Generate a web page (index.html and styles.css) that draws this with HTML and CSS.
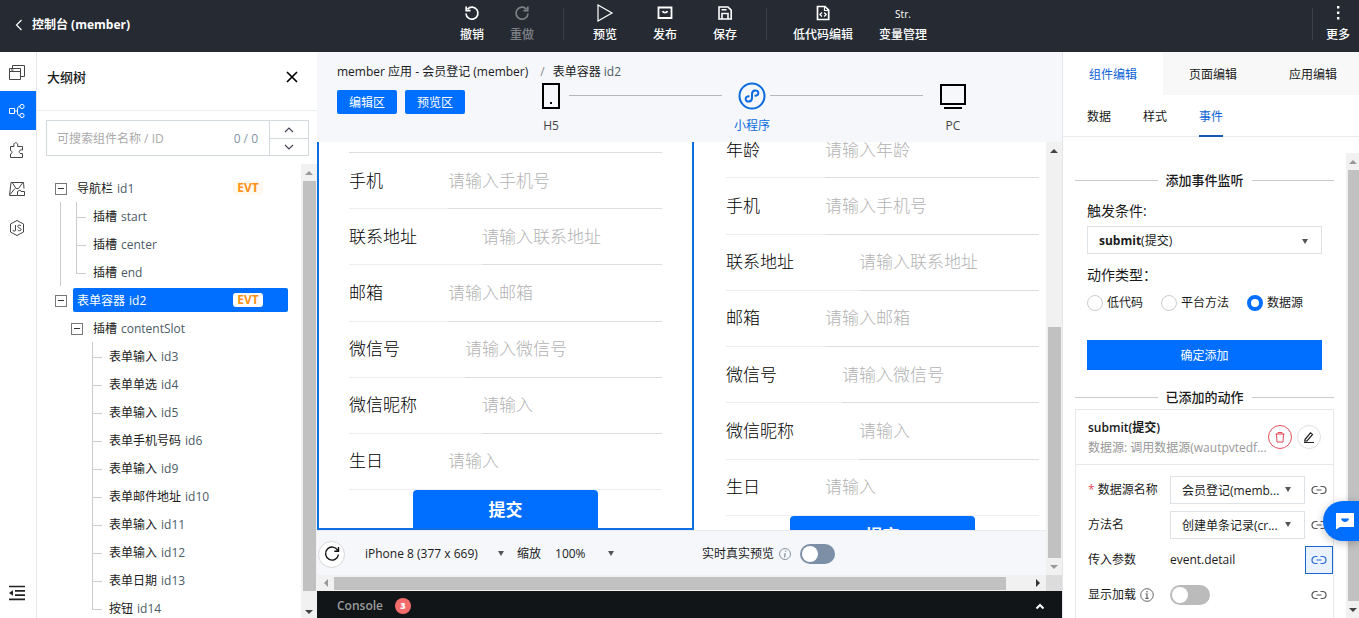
FILE: index.html
```html
<!DOCTYPE html>
<html lang="zh-CN">
<head>
<meta charset="utf-8">
<meta name="viewport" content="width=device-width, initial-scale=1">
<title>控制台 (member)</title>
<link rel="stylesheet" href="styles.css">
</head>
<body>
<header class="topbar">
  <a class="back" href="#">
    <svg width="8" height="12" viewBox="0 0 8 12"><path d="M6.500 1 1.500 6l5 5" fill="none" stroke="#fff" stroke-width="1.200"/></svg>
    <span>控制台 (member)</span>
  </a>
  <nav class="tools">
    <button class="tool"><svg viewBox="0 0 18 18"><path d="M4.500 5.200A6 6 0 1 1 3 9.500M3.200 2.500v4.200h4.300" fill="none" stroke="currentColor" stroke-width="1.700"/></svg>撤销</button>
    <button class="tool" disabled><svg viewBox="0 0 18 18"><path d="M13.500 5.200A6 6 0 1 0 15 9.500M14.800 2.500v4.200h-4.300" fill="none" stroke="currentColor" stroke-width="1.700"/></svg>重做</button>
    <i class="sep"></i>
    <button class="tool mid"><svg viewBox="0 0 18 18"><path d="M2 1v16l14-8z" fill="none" stroke="currentColor" stroke-width="1.200"/></svg>预览</button>
    <button class="tool mid"><svg viewBox="0 0 18 18"><path d="M2.500 3.500h13v10.500h-13z" fill="none" stroke="currentColor" stroke-width="1.800"/><path d="M6.500 7.200c1 2 4 2 5 0" fill="none" stroke="currentColor" stroke-width="1.800"/></svg>发布</button>
    <button class="tool mid"><svg viewBox="0 0 18 18"><path d="M3 3h9l3.200 3.200V15H3zM6 15V9.500h6V15M5.500 5.800h5" fill="none" stroke="currentColor" stroke-width="1.600"/></svg>保存</button>
    <i class="sep second"></i>
    <button class="tool wide"><svg viewBox="0 0 18 18"><path d="M3.500 2.500h7.500l3.700 3.700v9.300H3.500z" fill="none" stroke="currentColor" stroke-width="1.700"/><path d="M10.500 2.500v4h4" fill="none" stroke="currentColor" stroke-width="1.200"/><path d="M8 8.500 6 10.500l2 2M10.200 8.500l2 2-2 2" fill="none" stroke="currentColor" stroke-width="1.300"/></svg>低代码编辑</button>
    <button class="tool wide"><span class="str">Str.</span>变量管理</button>
  </nav>
  <div class="more">
    <i class="sep"></i>
    <button class="tool"><svg viewBox="0 0 18 18"><path d="M8 2h2.400v2.400H8zM8 7.500h2.400v2.400H8zM8 13h2.400v2.400H8z" fill="currentColor"/></svg>更多</button>
  </div>
</header>

<main class="workspace">
  <nav class="rail">
    <button aria-label="页面"><svg viewBox="0 0 18 18"><path d="M1.500 5.500h11v11h-11zM1.500 8.500h11M4.500 5V2.500h12v11h-3.500M3 7h2.500" fill="none" stroke="currentColor"/></svg></button>
    <button class="active" aria-label="大纲树"><svg viewBox="0 0 18 18"><path d="M1.500 6.500h5v5h-5zM6.500 9h3M12 4.500c-2 0-2.500 1-2.500 2.500v4c0 1.500.5 2.500 2.500 2.500" fill="none" stroke="currentColor"/><circle cx="14" cy="4.500" r="2.100" fill="none" stroke="currentColor"/><circle cx="14" cy="13.500" r="2.100" fill="none" stroke="currentColor"/></svg></button>
    <button aria-label="组件"><svg viewBox="0 0 18 18"><path d="M2.500 5.500H6c-1.500-5 5-5 3.600 0H14.500v3.500c-4.500-1-4.500 4.500 0 3.500V16.500H2.500V13c2 0 2-3.500 0-3.500z" fill="none" stroke="currentColor"/></svg></button>
    <button aria-label="素材"><svg viewBox="0 0 18 18"><path d="M9 15.500H1.500L3 2.500h12.500l.5 6M4.500 3 8 8.500h2.500L14.500 3M2 14.500l5-6M9.500 15.500v-4l2.500-1.500 1 1.500h3.500v4z" fill="none" stroke="currentColor"/></svg></button>
    <button aria-label="脚本"><svg viewBox="0 0 18 18"><path d="M9 1.500 15.500 5v8L9 16.500 2.500 13V5z" fill="none" stroke="currentColor"/><path d="M7.500 6v5c0 1.800-2.500 1.600-2.500 0M13 6.800c-1-1.200-3.300-.8-3.300.7 0 1.800 3.400 1.200 3.400 3 0 1.500-2.600 1.700-3.600.4" fill="none" stroke="currentColor"/></svg></button>
    <button class="fold" aria-label="收起"><svg viewBox="0 0 18 18"><path d="M1 2.500h16M7 6.800h10M7 11.100h10M1 15.400h16" stroke="currentColor" stroke-width="1.700"/><path d="M1 9l4-2.800v5.600z" fill="currentColor"/></svg></button>
  </nav>

  <section class="outline">
    <div class="outline-head">
      <h2>大纲树</h2>
      <button aria-label="关闭"><svg width="12" height="12" viewBox="0 0 12 12"><path d="m1 1 10 10M11 1 1 11" stroke="#000" stroke-width="1.700"/></svg></button>
    </div>
    <div class="search">
      <input type="text" aria-label="搜索组件" placeholder="可搜索组件名称 / ID">
      <span class="count">0 / 0</span>
      <div class="stepper">
        <button aria-label="上一个"><svg width="10" height="6" viewBox="0 0 10 6"><path d="m1 5 4-4 4 4" fill="none" stroke="#445" stroke-width="1.200"/></svg></button>
        <button aria-label="下一个"><svg width="10" height="6" viewBox="0 0 10 6"><path d="m1 1 4 4 4-4" fill="none" stroke="#445" stroke-width="1.200"/></svg></button>
      </div>
    </div>
    <div class="tree-area">
      <ul class="tree">
        <li>
          <div class="node"><button class="toggle" aria-label="折叠"></button><span class="name">导航栏 <em>id1</em><b class="evt">EVT</b></span></div>
          <ul class="kids ruled">
            <li class="leaf"><span class="name">插槽 <em>start</em></span></li>
            <li class="leaf"><span class="name">插槽 <em>center</em></span></li>
            <li class="leaf"><span class="name">插槽 <em>end</em></span></li>
          </ul>
        </li>
        <li>
          <div class="node selected"><button class="toggle" aria-label="折叠"></button><span class="name">表单容器 <em>id2</em><b class="evt">EVT</b></span></div>
          <ul class="kids">
            <li>
              <div class="node"><button class="toggle" aria-label="折叠"></button><span class="name">插槽 <em>contentSlot</em></span></div>
              <ul class="kids deep">
                <li class="leaf"><span class="name">表单输入 <em>id3</em></span></li>
                <li class="leaf"><span class="name">表单单选 <em>id4</em></span></li>
                <li class="leaf"><span class="name">表单输入 <em>id5</em></span></li>
                <li class="leaf"><span class="name">表单手机号码 <em>id6</em></span></li>
                <li class="leaf"><span class="name">表单输入 <em>id9</em></span></li>
                <li class="leaf"><span class="name">表单邮件地址 <em>id10</em></span></li>
                <li class="leaf"><span class="name">表单输入 <em>id11</em></span></li>
                <li class="leaf"><span class="name">表单输入 <em>id12</em></span></li>
                <li class="leaf"><span class="name">表单日期 <em>id13</em></span></li>
                <li class="leaf"><span class="name">按钮 <em>id14</em></span></li>
              </ul>
            </li>
          </ul>
        </li>
      </ul>
      <div class="vbar tree-bar"><i class="up dim"></i><i class="thumb"></i><i class="down"></i></div>
    </div>
  </section>

  <section class="center">
    <div class="center-head">
      <div class="crumbs"><span>member 应用 - 会员登记 (member)</span><span class="slash">/</span><span>表单容器 <em>id2</em></span></div>
      <div class="head-row">
        <div class="areas"><button>编辑区</button><button>预览区</button></div>
        <div class="devices">
          <button class="device"><svg viewBox="0 0 28 28"><path d="M6 2h16v24H6z" fill="none" stroke="#000" stroke-width="2"/><path d="M13 20h2v2h-2z"/></svg>H5</button>
          <i class="link"></i>
          <button class="device on"><svg viewBox="0 0 28 28"><circle cx="14" cy="14" r="12.500" fill="none" stroke="#0b6be0" stroke-width="2"/><path d="M11.500 14.200C6 14 7 20 10.800 19.600 13 19.400 14 18 14 16v-4c0-2 1-3.500 3.200-3.600C21 8.200 22 13.500 16.500 13.800" fill="none" stroke="#0b6be0" stroke-width="2"/></svg>小程序</button>
          <i class="link"></i>
          <button class="device"><svg viewBox="0 0 28 28"><path d="M2 3h24v19H2z" fill="none" stroke="#000" stroke-width="2"/><path d="M5 26h18" stroke="#000" stroke-width="2"/></svg>PC</button>
        </div>
      </div>
    </div>
    <div class="center-body">
      <div class="stage">
        <div class="screen editing">
          <form class="form">
            <div class="fields">
              <div class="field"><label for="a2">手机</label><input id="a2" placeholder="请输入手机号"></div>
              <div class="field"><label for="a3">联系地址</label><input id="a3" placeholder="请输入联系地址"></div>
              <div class="field"><label for="a4">邮箱</label><input id="a4" placeholder="请输入邮箱"></div>
              <div class="field"><label for="a5">微信号</label><input id="a5" placeholder="请输入微信号"></div>
              <div class="field"><label for="a6">微信昵称</label><input id="a6" placeholder="请输入"></div>
              <div class="field"><label for="a7">生日</label><input id="a7" placeholder="请输入"></div>
            </div>
            <button class="submit" type="button">提交</button>
          </form>
        </div>
        <div class="screen preview">
          <form class="form">
            <div class="fields">
              <div class="field"><label for="b1">年龄</label><input id="b1" placeholder="请输入年龄"></div>
              <div class="field"><label for="b2">手机</label><input id="b2" placeholder="请输入手机号"></div>
              <div class="field"><label for="b3">联系地址</label><input id="b3" placeholder="请输入联系地址"></div>
              <div class="field"><label for="b4">邮箱</label><input id="b4" placeholder="请输入邮箱"></div>
              <div class="field"><label for="b5">微信号</label><input id="b5" placeholder="请输入微信号"></div>
              <div class="field"><label for="b6">微信昵称</label><input id="b6" placeholder="请输入"></div>
              <div class="field"><label for="b7">生日</label><input id="b7" placeholder="请输入"></div>
            </div>
            <button class="submit" type="button">提交</button>
          </form>
        </div>
      </div>
      <div class="device-bar">
        <button class="refresh" aria-label="刷新"><svg width="18" height="18" viewBox="0 0 18 18"><path d="M14.800 5.500A6.500 6.500 0 1 0 15.500 9.500M15.500 2v4.200h-4.200" fill="none" stroke="#111" stroke-width="1.400"/></svg></button>
        <select class="pick model" aria-label="机型"><option>iPhone 8 (377 x 669)</option></select>
        <label class="zoom">缩放 <select class="pick scale"><option>100%</option></select></label>
        <label class="live" for="live">实时真实预览</label>
        <svg class="info" viewBox="0 0 14 14"><circle cx="7" cy="7" r="5.500" fill="none" stroke="#8a94a0"/><path d="M7.600 3.500v1.200M7.200 6l-.7 4.500" stroke="#8a94a0" stroke-width="1.300"/></svg>
        <input class="switch" id="live" type="checkbox">
      </div>
      <div class="vbar center-bar"><i class="up"></i><i class="rest"></i><i class="thumb"></i><i class="down dim"></i></div>
      <div class="hbar"><i class="left"></i><i class="thumb"></i><i class="rest"></i><i class="right"></i></div>
      <i class="corner"></i>
    </div>
    <div class="console"><span>Console</span><b>3</b><svg width="10" height="7" viewBox="0 0 10 7"><path d="m1.500 5.500 3.500-3.500 3.500 3.500" fill="none" stroke="#fff" stroke-width="2"/></svg></div>
  </section>

  <aside class="inspector">
    <nav class="tabs"><button class="on">组件编辑</button><button>页面编辑</button><button>应用编辑</button></nav>
    <nav class="subtabs"><button>数据</button><button>样式</button><button class="on">事件</button></nav>
    <div class="inspector-body">
      <div class="panel">
        <h3>添加事件监听</h3>
        <div class="add">
          <p class="caption" id="trig">触发条件:</p>
          <button class="combo" aria-haspopup="listbox" aria-labelledby="trig"><span><b>submit</b>(提交)</span><i class="caret"></i></button>
          <p class="caption">动作类型：</p>
          <div class="radios">
            <label><input type="radio" name="kind">低代码</label>
            <label><input type="radio" name="kind">平台方法</label>
            <label><input type="radio" name="kind" checked>数据源</label>
          </div>
          <button class="confirm">确定添加</button>
        </div>
        <h3>已添加的动作</h3>
        <div class="card">
          <div class="card-head">
            <div class="card-text"><strong>submit(提交)</strong><span>数据源: 调用数据源(wautpvtedf...</span></div>
            <button class="round del" aria-label="删除"><svg width="12" height="12" viewBox="0 0 12 12"><path d="M1.500 3h9M4 3V1.500h4V3M2.500 3l.5 8h6l.5-8" fill="none" stroke="#e34d59"/></svg></button>
            <button class="round" aria-label="编辑"><svg width="12" height="12" viewBox="0 0 12 12"><path d="M2 8.500 7.500 1.800l2 1.700L4 10l-2.200.2zM1 11.500h10" fill="none" stroke="#222" stroke-width="1.200"/></svg></button>
          </div>
          <div class="params">
            <label for="ds"><i class="req">*</i> 数据源名称</label>
            <select id="ds"><option>会员登记(memb...</option></select>
            <button class="bind" aria-label="绑定"><svg viewBox="0 0 16 10"><path d="M6.500 1.500H4.500a3.500 3.500 0 0 0 0 7h2M9.500 1.500h2a3.500 3.500 0 0 1 0 7h-2M5.500 5h5" fill="none" stroke="currentColor" stroke-width="1.200"/></svg></button>
            <label for="fn">方法名</label>
            <select id="fn"><option>创建单条记录(cr...</option></select>
            <button class="bind" aria-label="绑定"><svg viewBox="0 0 16 10"><path d="M6.500 1.500H4.500a3.500 3.500 0 0 0 0 7h2M9.500 1.500h2a3.500 3.500 0 0 1 0 7h-2M5.500 5h5" fill="none" stroke="currentColor" stroke-width="1.200"/></svg></button>
            <span>传入参数</span>
            <span>event.detail</span>
            <button class="bind on" aria-label="绑定"><svg viewBox="0 0 16 10"><path d="M6.500 1.500H4.500a3.500 3.500 0 0 0 0 7h2M9.500 1.500h2a3.500 3.500 0 0 1 0 7h-2M5.500 5h5" fill="none" stroke="currentColor" stroke-width="1.200"/></svg></button>
            <label class="loading" for="ld">显示加载 <svg class="info" viewBox="0 0 14 14"><circle cx="7" cy="7" r="6.300" fill="none" stroke="#666"/><path d="M7 3v1.500M5.500 6H7v4M5.300 10.300h3.400" fill="none" stroke="#666" stroke-width="1.200"/></svg></label>
            <input class="switch gray" id="ld" type="checkbox">
            <button class="bind" aria-label="绑定"><svg viewBox="0 0 16 10"><path d="M6.500 1.500H4.500a3.500 3.500 0 0 0 0 7h2M9.500 1.500h2a3.500 3.500 0 0 1 0 7h-2M5.500 5h5" fill="none" stroke="currentColor" stroke-width="1.200"/></svg></button>
          </div>
        </div>
      </div>
      <div class="vbar side-bar"><i class="up dim"></i><i class="thumb"></i><i class="down"></i></div>
    </div>
  </aside>
</main>
<button class="chat" aria-label="客服"><svg width="20" height="18" viewBox="0 0 20 18"><path d="M1 1h18v14H5l-4 2.500z" fill="#fff"/><path d="M6 6.500h8c-1 4.500-7 4.500-8 0z" fill="#006eff"/></svg></button>
</body>
</html>
```

FILE: styles.css
```css
* { box-sizing: border-box; }
body {
  margin: 0;
  height: 100vh;
  display: flex;
  flex-direction: column;
  overflow: hidden;
  position: relative;
  font: 12px/20px "Open Sans", "Noto Sans CJK SC", sans-serif;
  color: #1a1a1a;
  background: #fff;
}
button, input, select { font: inherit; color: inherit; margin: 0; padding: 0; border: 0; background: none; }
ul, h2, h3, p { margin: 0; padding: 0; list-style: none; }
em, i { font-style: normal; }
svg { display: block; flex: none; }

/* top bar */
.topbar { flex: none; height: 52px; display: grid; grid-template-columns: 1fr auto 1fr; background: #262b33; color: #fff; }
.back { display: flex; align-items: center; gap: 9px; padding: 0 0 3px 15px; color: #fff; font-weight: 700; text-decoration: none; }
.tools { display: flex; margin-left: 31px; }
.tool { width: 50px; padding-top: 4px; display: flex; flex-direction: column; align-items: center; gap: 3px; font-weight: 500; white-space: nowrap; }
.tool svg { width: 18px; height: 18px; }
.tool.mid { width: 60px; }
.tool.wide { width: 80px; }
.tool:disabled { color: #7d8186; }
.str { height: 18px; font-size: 10px; }
.sep { width: 1px; height: 32px; margin: 8px 11px 0 16px; background: #3c4149; }
.sep.second { margin: 8px 16px 0 11px; }
.more { display: flex; justify-content: flex-end; }
.more .sep { margin: 8px 0 0; }
.more .tool { margin-right: -4px; }

.workspace { flex: 1; min-height: 0; display: flex; }

/* icon rail */
.rail { flex: none; width: 37px; display: flex; flex-direction: column; border-right: 1px solid #e3e6ea; }
.rail button { height: 39px; display: flex; align-items: center; justify-content: center; padding-right: 3px; color: #444; }
.rail svg { width: 18px; height: 18px; }
.rail .active { background: #006eff; color: #fff; }
.rail .fold { margin: auto 0 6px; color: #222; }

/* outline tree */
.outline { flex: none; width: 280px; display: flex; flex-direction: column; min-height: 0; }
.outline-head { height: 59px; flex: none; display: flex; justify-content: space-between; padding: 15px 19px 0 10px; border-bottom: 1px solid #eceef1; }
.outline-head h2 { font-size: 13px; font-weight: 500; line-height: 20px; }
.outline-head button { height: 20px; }
.search { flex: none; height: 36px; margin: 9px 8px 0 9px; display: flex; align-items: center; border: 1px solid #d3dade; }
.search input { flex: 1; min-width: 0; padding: 2px 0 0 10px; outline: 0; }
.search input::placeholder { color: #aaa; opacity: 1; }
.count { padding: 2px 11px 0 0; color: #8494a5; }
.stepper { width: 39px; height: 100%; display: grid; grid-template-rows: 1fr 1fr; border-left: 1px solid #d3dade; }
.stepper button { display: grid; place-items: center; }
.stepper button + button { border-top: 1px solid #d3dade; }
.tree-area { flex: 1; min-height: 0; margin-top: 8px; display: flex; overflow: hidden; }
.tree { flex: 1; padding: 10px 13px 0 18px; }
.node { height: 28px; display: flex; align-items: center; gap: 6px; }
.toggle { flex: none; width: 12px; height: 12px; margin-top: 1px; border: 1px solid #777; background: linear-gradient(#333, #333) center / 6px 1px no-repeat; }
.name { display: flex; flex: 1; align-items: center; gap: 4px; height: 24px; padding: 2px 4px 0; border-radius: 2px; }
.name em, .crumbs em { color: #4b5b66; }
.evt { width: 30px; margin: 0 21px 2px auto; line-height: 14px; text-align: center; border-radius: 3px; background: #fff9ef; color: #ff9214; }
.selected .name { background: #006eff; color: #fff; }
.selected em { color: #fff; }
.selected .evt { background: #fff; }
.kids { margin-left: 16px; }
.kids.ruled { margin-left: 5px; padding-left: 15px; border-left: 1px solid #ccc; }
.kids.deep, .kids .kids { margin-left: 21px; }
.leaf { height: 28px; display: flex; align-items: center; gap: 3px; }
.leaf::before {
  content: "";
  width: 10px;
  height: 28px;
  background: linear-gradient(#ccc, #ccc) 0 0 / 1px 100% no-repeat, linear-gradient(#ccc, #ccc) 0 15px / 10px 1px no-repeat;
}
.leaf:last-child::before { background-size: 1px 15px, 10px 1px; }

/* scrollbars */
.vbar { flex: none; width: 16px; display: flex; flex-direction: column; align-items: center; background: #f1f1f1; }
.vbar .thumb { width: 13px; flex: 1; background: #c1c1c1; }
.up, .down { width: 17px; height: 17px; flex: none; display: grid; place-items: center; }
.up::before, .down::before { content: ""; border: 4px solid transparent; border-top-width: 0; border-bottom: 4px solid #444; }
.down::before { border-top: 4px solid #444; border-bottom-width: 0; }
.up.dim::before { border-bottom-color: #999; }
.down.dim::before { border-top-color: #999; }
.tree-bar .down { height: 27px; padding-top: 14px; }

/* center */
.center { flex: 1; min-width: 0; display: flex; flex-direction: column; background: #f5f7fa; }
.center-head { flex: none; height: 90px; padding: 10px 0 0 20px; }
.crumbs { display: flex; gap: 8px; }
.crumbs .slash { margin-left: 4px; color: #888; }
.head-row { display: flex; align-items: flex-start; }
.areas { flex: none; display: flex; gap: 8px; padding-top: 8px; }
.areas button { width: 60px; height: 24px; padding-top: 2px; border-radius: 2px; background: #006eff; color: #fff; }
.devices { flex: 1; display: flex; margin: 0 91px 0 68px; }
.device { flex: none; width: 36px; display: flex; flex-direction: column; align-items: center; gap: 6px; white-space: nowrap; color: #444; }
.device svg { width: 28px; height: 28px; }
.device.on { color: #0b6be0; }
.link { flex: 1; height: 1px; margin: 13px 12px 0 0; background: #b4b8bc; }
.center-body { flex: 1; min-height: 0; display: grid; grid-template: minmax(0, 1fr) 45px 16px / minmax(0, 1fr) 16px; }
.stage { grid-area: 1 / 1; display: flex; overflow: hidden; background: #fff; }
.screen { flex: none; width: 377px; padding: 0 32px; overflow: hidden; background: #fff; }
.editing { padding: 10px 30px 0; border: solid #0d6fe0; border-width: 0 2px 2px; }
.fields { height: 394px; display: grid; grid-auto-rows: 1fr; grid-template-columns: minmax(0, 1fr); }
.editing .fields { height: 338px; border-top: 1px solid #ddd; }
.preview .form { margin-top: -20px; }
.field { display: flex; gap: 65px; border-bottom: 1px solid #eee; font-size: 17px; font-weight: 300; color: #000; }
.field label { display: flex; flex: none; align-items: center; white-space: nowrap; }
.field input { flex: 1; min-width: 0; margin-bottom: -1px; border-bottom: 1px solid #ddd; outline: 0; }
.field:last-child input { border-color: #eee; }
.field input::placeholder { color: #b2b2b2; opacity: 1; }
.submit { display: block; width: 185px; height: 39px; margin: 0 auto; border-radius: 4px 4px 0 0; background: #006eff; color: #fff; font-size: 17px; font-weight: 700; }
.device-bar { grid-area: 2 / 1; display: flex; align-items: center; padding: 2px 0 0 1px; border-top: 1px solid #e8eaed; }
.refresh { width: 27px; height: 27px; margin-right: 20px; display: grid; place-items: center; border: 1px solid #d5d8db; border-radius: 50%; background: #fff; }
.pick, .params select { appearance: none; background: url("data:image/svg+xml,%3Csvg xmlns='http://www.w3.org/2000/svg' width='6' height='6'%3E%3Cpath d='M0 0h6L3 5z' fill='%23555'/%3E%3C/svg%3E") right 4px center no-repeat; }
.model { width: 143px; }
.zoom { display: flex; gap: 14px; margin-left: 9px; }
.scale { width: 63px; }
.live { margin-left: 84px; white-space: nowrap; }
.info { width: 14px; height: 14px; margin: 0 8px 0 4px; }
.switch { appearance: none; flex: none; width: 35px; height: 20px; padding: 2px; border-radius: 10px; background: #7c8fa6; }
.switch::before { content: ""; display: block; width: 16px; height: 16px; border-radius: 50%; background: #fff; }
.center-bar { grid-area: 1 / 2 / 3 / 3; }
.center-bar .rest { flex: 168; }
.center-bar .thumb { flex: 230; }
.hbar { grid-area: 3 / 1; display: flex; align-items: center; background: #f1f1f1; }
.hbar .thumb { flex: 672; height: 13px; background: #c1c1c1; }
.hbar .rest { flex: 23; }
.left, .right { width: 17px; height: 16px; display: grid; place-items: center; }
.left::before, .right::before { content: ""; border: 4px solid transparent; border-left-width: 0; border-right-color: #999; }
.right::before { border-left: 4px solid #333; border-right-width: 0; }
.corner { grid-area: 3 / 2; background: #dcdcdc; }
.console { flex: none; height: 27px; display: flex; align-items: center; gap: 12px; padding: 3px 17px 0 20px; background: #111518; color: #9a9c9e; font-weight: 600; }
.console b { width: 16px; height: 16px; border-radius: 50%; background: #f56c6c; color: #fff; font-size: 9px; line-height: 16px; text-align: center; }
.console svg { margin-left: auto; }

/* inspector */
.inspector { flex: none; width: 297px; display: flex; flex-direction: column; border-left: 1px solid #e3e5e8; min-height: 0; }
.tabs { flex: none; height: 43px; display: flex; overflow: hidden; }
.tabs button { flex: none; width: 100px; padding-top: 2px; background: #f8f8f9; }
.tabs button.on { background: #fff; color: #0b62d6; }
.subtabs { flex: none; height: 42px; display: flex; gap: 32px; padding-left: 24px; border-bottom: 1px solid #e9ebee; }
.subtabs button { height: 42px; padding-top: 4px; border-bottom: 2px solid transparent; }
.subtabs .on { color: #0b62d6; border-color: #1a56b8; }
.inspector-body { flex: 1; min-height: 0; display: flex; overflow: hidden; }
.panel { flex: 1; min-width: 0; padding: 33px 12px 0; }
.panel h3 { display: flex; align-items: center; gap: 8px; font-size: 13px; font-weight: 500; line-height: 20px; }
.panel h3::before, .panel h3::after { content: ""; flex: 1; height: 1px; background: #c8cacc; }
.add { padding: 11px 12px 17px; }
.caption { font-size: 14px; line-height: 20px; }
.combo { width: 100%; height: 28px; margin: 5px 0 11px; padding: 2px 13px 0 11px; display: flex; align-items: center; justify-content: space-between; border: 1px solid #dde2e6; }
.caret { border: 3px solid transparent; border-top: 5px solid #555; border-bottom-width: 0; }
.radios { display: flex; gap: 18px; margin-top: 8px; }
.radios label { display: flex; align-items: center; gap: 4px; white-space: nowrap; }
.radios input { appearance: none; width: 16px; height: 16px; border: 1px solid #c8ccd0; border-radius: 50%; background: #fff; }
.radios input:checked { border: 4px solid #006eff; }
.confirm { width: 100%; height: 30px; margin-top: 27px; padding-top: 2px; background: #006eff; color: #fff; }
.card { margin-top: 2px; border: 1px solid #e6e8eb; }
.card-head { height: 55px; display: flex; align-items: center; gap: 5px; padding: 0 12px; border-bottom: 1px solid #e6e8eb; }
.card-text { flex: 1; min-width: 0; padding-top: 2px; display: flex; flex-direction: column; white-space: nowrap; }
.card-text strong { font-weight: 600; }
.card-text span { color: #999; }
.round { flex: none; width: 24px; height: 24px; display: grid; place-items: center; border: 1px solid #dcdfe2; border-radius: 50%; }
.round.del { border-color: #e34d59; }
.params { display: grid; grid-template-columns: 82px minmax(0, 1fr) 28px; grid-auto-rows: 28px; row-gap: 7px; align-items: center; padding: 11px 0 20px 12px; }
.params select { height: 28px; padding: 2px 20px 0 11px; border: 1px solid #dde2e6; background-position: right 13px top 10px; }
.req { color: #e34d59; }
.loading { display: flex; align-items: center; white-space: nowrap; }
.gray { width: 40px; background: #bbb; }
.bind { height: 28px; display: grid; place-items: center; color: #555; }
.bind svg { width: 16px; height: 10px; }
.bind.on { border: 1px solid #1a66d0; background: #eaf2ff; color: #2a6bd4; }
.side-bar { width: 13px; margin-top: 16px; }
.side-bar .thumb { width: 11px; align-self: flex-end; }

.chat { position: absolute; right: 0; bottom: 77px; width: 36px; height: 40px; padding-left: 12px; border-radius: 20px 0 0 20px; background: #006eff; box-shadow: 0 2px 8px rgba(0, 0, 0, .25); }
```
